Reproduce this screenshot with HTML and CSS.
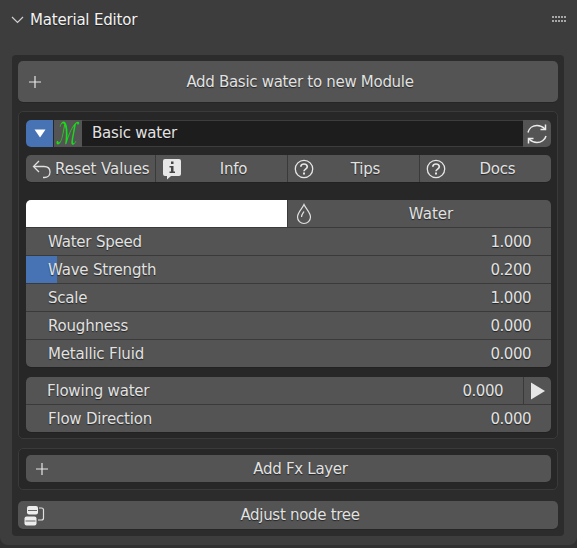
FILE: index.html
```html
<!DOCTYPE html>
<html lang="en">
  <head>
    <meta charset="UTF-8" />
    <title>Material Editor</title>
    <link rel="stylesheet" href="styles.css">
  </head>
  <body>
    <div class="panel">
      <header class="panel-head">
        <svg class="chevron" width="13" height="8" viewBox="0 0 13 8"><path d="M1 1l5.500 5.500L12 1" fill="none" stroke="#d0d0d0" stroke-width="1.2"/></svg>
        <span class="panel-title">Material Editor</span>
        <svg class="grip" width="15" height="8" viewBox="0 0 15 8" fill="#a8a8a8">
          <rect x="0" y="0" width="2" height="2"/><rect x="3" y="0" width="2" height="2"/><rect x="6" y="0" width="2" height="2"/><rect x="9" y="0" width="2" height="2"/><rect x="12" y="0" width="2" height="2"/>
          <rect x="0" y="4" width="2" height="2"/><rect x="3" y="4" width="2" height="2"/><rect x="6" y="4" width="2" height="2"/><rect x="9" y="4" width="2" height="2"/><rect x="12" y="4" width="2" height="2"/>
        </svg>
      </header>

      <div class="panel-body">
        <button class="btn btn-big">
          <svg class="btn-icon" width="14" height="14" viewBox="0 0 14 14"><path d="M7 1v12M1 7h12" stroke="#e6e6e6" stroke-width="1.2"/></svg>
          <span>Add Basic water to new Module</span>
        </button>

        <section class="box box-main">
          <div class="name-row">
            <div class="drop-btn"><svg width="14" height="9" viewBox="0 0 14 9"><path d="M1.500 0.500h11L7 8.500z" fill="#fff"/></svg></div>
            <div class="logo-btn"><span class="logo-mark">ℳ</span></div>
            <div class="name-field">Basic water</div>
            <div class="refresh-btn">
              <svg width="22" height="22" viewBox="0 0 22 22" fill="none" stroke="#ececec" stroke-width="1.500">
                <path d="M2 9.500C3 5 7 2.500 11 2.500c3 0 5.500 1 8 3.500"/><path d="M19.500 1.500v5h-5"/>
                <path d="M20 13c-1 4-5 6.500-9 6.500-3 0-5.500-1-8-3.500"/><path d="M2.500 20.500v-5h5"/>
              </svg>
            </div>
          </div>

          <div class="action-row">
            <div class="action action-reset">
              <svg width="20" height="20" viewBox="0 0 20 20" fill="none" stroke="#e0e0e0" stroke-width="1.300"><path d="M7 2L1.500 7.500 7 13"/><path d="M2 7.500h10c3.500 0 6 2 6 5.500s-2.500 5.500-5.500 5.500H11"/></svg>
              <span>Reset Values</span>
            </div>
            <div class="action action-wide">
              <svg class="action-icon" width="20" height="22" viewBox="0 0 20 22"><path d="M3 1h14a2 2 0 0 1 2 2v13a2 2 0 0 1-2 2H9l-4 3.500V18H3a2 2 0 0 1-2-2V3a2 2 0 0 1 2-2z" fill="#e6e6e6"/><path d="M9 3.500h2.500v2.500H9zM7.500 8h4v5.500H13V15H7.500v-1.500H9V9.500H7.500z" fill="#444"/></svg>
              <span>Info</span>
            </div>
            <div class="action action-wide">
              <svg class="action-icon" width="20" height="20" viewBox="0 0 20 20"><circle cx="10" cy="10" r="8.700" fill="none" stroke="#e6e6e6" stroke-width="1.300"/><path d="M6.800 7.800C6.800 5.800 8.300 5 10 5s3.300 1 3.300 2.800c0 2.300-3.300 2.300-3.300 4.500" fill="none" stroke="#e6e6e6" stroke-width="1.700"/><rect x="9" y="13.500" width="2" height="2" fill="#e6e6e6"/></svg>
              <span>Tips</span>
            </div>
            <div class="action action-docs">
              <svg class="action-icon" width="20" height="20" viewBox="0 0 20 20"><circle cx="10" cy="10" r="8.700" fill="none" stroke="#e6e6e6" stroke-width="1.300"/><path d="M6.800 7.800C6.800 5.800 8.300 5 10 5s3.300 1 3.300 2.800c0 2.300-3.300 2.300-3.300 4.500" fill="none" stroke="#e6e6e6" stroke-width="1.700"/><rect x="9" y="13.500" width="2" height="2" fill="#e6e6e6"/></svg>
              <span>Docs</span>
            </div>
          </div>

          <div class="props">
            <div class="color-row">
              <div class="swatch"></div>
              <div class="color-name">
                <svg class="action-icon drop-icon" width="16" height="22" viewBox="0 0 16 22" fill="none" stroke="#e0e0e0" stroke-width="1.200"><path d="M8 1.500C6 6 1.500 9.500 1.500 14a6.500 6.500 0 0 0 13 0C14.500 9.500 10 6 8 1.500z"/><path d="M5.500 14c0-2 1.500-4 2.500-5.500"/></svg>
                <span>Water</span>
              </div>
            </div>
            <div class="prop"><span>Water Speed</span><span class="val">1.000</span></div>
            <div class="prop prop-wave"><span>Wave Strength</span><span class="val">0.200</span></div>
            <div class="prop"><span>Scale</span><span class="val">1.000</span></div>
            <div class="prop"><span>Roughness</span><span class="val">0.000</span></div>
            <div class="prop"><span>Metallic Fluid</span><span class="val">0.000</span></div>
          </div>

          <div class="props props-flow">
            <div class="prop prop-flowing">
              <div class="flow-value"><span>Flowing water</span><span class="val">0.000</span></div>
              <div class="play-btn"><svg width="16" height="18" viewBox="0 0 16 18"><path d="M1 0.500L15 9 1 17.500z" fill="#e6e6e6"/></svg></div>
            </div>
            <div class="prop"><span>Flow Direction</span><span class="val">0.000</span></div>
          </div>
        </section>

        <section class="box box-fx">
          <button class="btn btn-fx">
            <svg class="btn-icon" width="14" height="14" viewBox="0 0 14 14"><path d="M7 1v12M1 7h12" stroke="#e6e6e6" stroke-width="1.2"/></svg>
            <span>Add Fx Layer</span>
          </button>
        </section>

        <button class="btn btn-adjust">
          <svg class="btn-icon" width="21" height="21" viewBox="0 0 21 21">
            <rect x="3" y="1" width="11" height="8.500" rx="2" fill="#ececec"/><rect x="4" y="5" width="9" height="1" fill="#666"/>
            <rect x="0.500" y="11.500" width="12" height="9" rx="2" fill="#ececec"/><rect x="1.500" y="15.500" width="10" height="1" fill="#666"/>
            <path d="M15 3h2.500a2 2 0 0 1 2 2v8a2 2 0 0 1-2 2H14" fill="none" stroke="#e0e0e0" stroke-width="1.200"/>
          </svg>
          <span>Adjust node tree</span>
        </button>
      </div>
    </div>
  </body>
</html>
```

FILE: styles.css
```css
* {
  box-sizing: border-box;
}

html,
body {
  margin: 0;
  padding: 0;
  height: 100%;
}

body {
  background-color: #303030;
  font-family: "DejaVu Sans", sans-serif;
  font-size: 15px;
  letter-spacing: -0.2px;
  color: #e2e2e2;
  overflow: hidden;
}

.panel {
  background-color: #3d3d3d;
  height: 545px;
  padding-top: 1px;
  border-radius: 0 0 8px 8px;
}

.panel-head {
  display: flex;
  align-items: center;
  height: 38px;
  padding: 0 10px 0 11px;
}

.panel-title {
  margin-left: 6px;
  color: #f2f2f2;
  text-shadow: 0 1px 1px rgba(0, 0, 0, 0.5);
}

.grip {
  margin-left: auto;
}

.panel-body {
  margin: 16px 13px 0 12px;
  padding: 6px 6px;
  height: 481px;
  background-color: #2c2c2c;
  border-radius: 4px;
}

.btn {
  display: flex;
  align-items: center;
  justify-content: center;
  position: relative;
  width: 100%;
  padding: 0 0 0 24px;
  border: 0;
  border-radius: 5px;
  background-color: #545454;
  color: #e2e2e2;
  font: inherit;
  letter-spacing: -0.3px;
  text-shadow: 0 1px 1px rgba(0, 0, 0, 0.6);
  box-shadow: 0 1px 0 #262626;
}

/* icon sits over the left end, label stays centred */
.btn-icon {
  position: absolute;
  left: 10px;
}

.btn-big {
  height: 41px;
}

.box {
  border: 1px solid #3a3a3a;
  border-radius: 5px;
  background-color: #272727;
}

.box-main {
  margin-top: 9px;
  height: 328px;
  padding: 8px 6px 0 7px;
}

.name-row {
  display: flex;
  height: 27px;
}

.drop-btn {
  display: flex;
  align-items: center;
  justify-content: center;
  width: 27px;
  background-color: #4772b3;
  border-radius: 5px 0 0 5px;
}

.logo-btn {
  display: flex;
  align-items: center;
  justify-content: center;
  width: 28px;
  margin-left: 1px;
  background-color: #545454;
}

.logo-mark {
  display: block;
  color: #16dc16;
  font-size: 26px;
  line-height: 26px;
  letter-spacing: 0;
  transform: scale(0.74, 1.15) skewX(-16deg);
}

.name-field {
  flex: 1;
  padding-left: 10px;
  background-color: #1d1d1d;
  border: 1px solid #3d3d3d;
  border-width: 1px 0;
  line-height: 25px;
  text-shadow: 0 1px 1px rgba(0, 0, 0, 0.6);
}

.refresh-btn {
  display: flex;
  align-items: center;
  justify-content: center;
  width: 28px;
  background-color: #545454;
  border-radius: 0 5px 5px 0;
}

.action-row {
  display: flex;
  height: 27px;
  margin-top: 8px;
  background-color: #545454;
  border-radius: 5px;
  box-shadow: 0 1px 0 #222;
  text-shadow: 0 1px 1px rgba(0, 0, 0, 0.6);
}

.action {
  display: flex;
  align-items: center;
  position: relative;
  justify-content: center;
  padding-left: 24px;
  border-left: 1px solid #3a3a3a;
}

.action-reset {
  width: 129px;
  justify-content: flex-start;
  padding-left: 6px;
  gap: 3px;
  border-left: 0;
  letter-spacing: -0.1px;
}

.action-wide {
  width: 132px;
}

.action-docs {
  flex: 1;
}

.action-icon {
  position: absolute;
  left: 6px;
}

.props {
  margin-top: 18px;
  background-color: #545454;
  border-radius: 5px;
  overflow: hidden;
  box-shadow: 0 1px 0 #222;
  text-shadow: 0 1px 1px rgba(0, 0, 0, 0.6);
}

.props-flow {
  margin-top: 10px;
}

.val {
  letter-spacing: -0.5px;
}

.color-row {
  display: flex;
  height: 27px;
}

.swatch {
  width: 261px;
  background-color: #fff;
}

.color-name {
  flex: 1;
  display: flex;
  align-items: center;
  justify-content: center;
  position: relative;
  padding-left: 23px;
  border-left: 1px solid #3a3a3a;
  letter-spacing: 0;
}

.drop-icon {
  left: 8px;
}

.prop {
  display: flex;
  align-items: center;
  justify-content: space-between;
  height: 28px;
  padding: 0 20px 0 22px;
  border-top: 1px solid #3a3a3a;
}

.prop-wave {
  background-image: linear-gradient(to right, #4772b3 31px, transparent 31px);
}

.prop-flowing {
  height: 27px;
  padding: 0;
  border-top: 0;
}

.flow-value {
  flex: 1;
  display: flex;
  justify-content: space-between;
  padding: 0 20px 0 21px;
}

.play-btn {
  display: flex;
  align-items: center;
  justify-content: center;
  width: 28px;
  height: 100%;
  border-left: 1px solid #3a3a3a;
}

.box-fx {
  margin-top: 9px;
  height: 42px;
  padding: 6px 6px 0 7px;
}

.btn-fx {
  height: 27px;
}

.btn-fx .btn-icon {
  left: 9px;
}

.btn-adjust {
  margin-top: 11px;
  height: 28px;
}

.btn-adjust .btn-icon {
  left: 6px;
}
```
